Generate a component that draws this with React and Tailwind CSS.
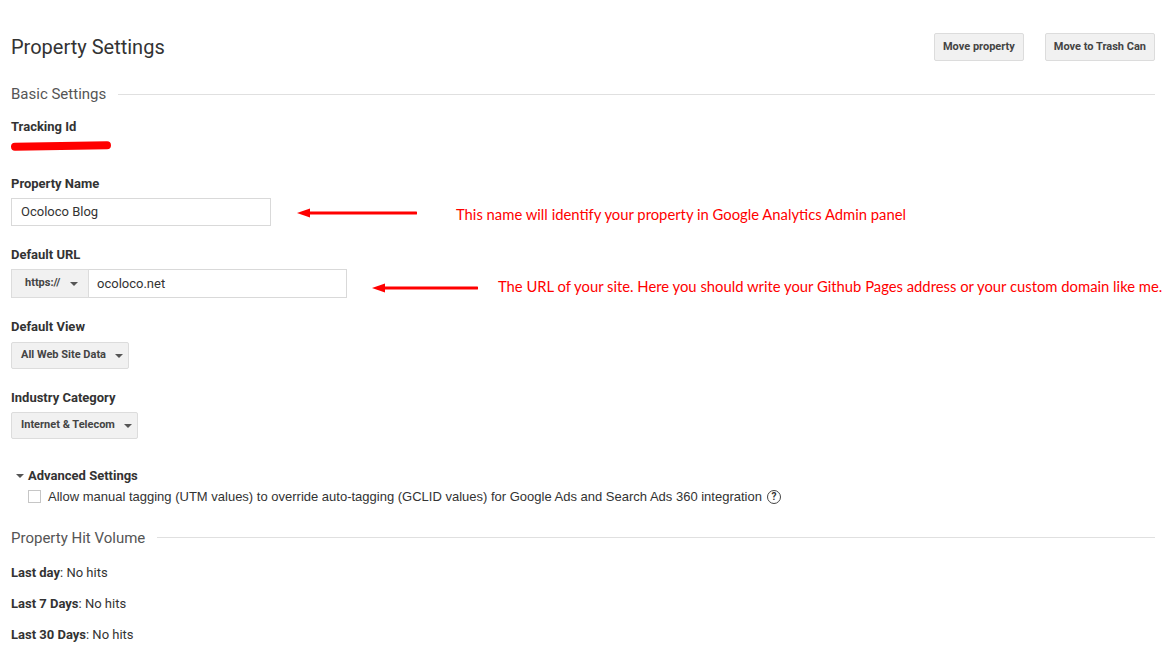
import React from "react";

const roboto = { fontFamily: "Roboto, 'Liberation Sans', sans-serif" };

function Caret() {
  return <span className="inline-block w-0 h-0 border-l-[4px] border-r-[4px] border-t-[4px] border-l-transparent border-r-transparent border-t-[#555]" />;
}

function Arrow({ width }) {
  return (
    <svg width={width} height="12" viewBox={`0 0 ${width} 12`} className="block">
      <line x1="10" y1="6" x2={width - 1} y2="6" stroke="#ff0000" strokeWidth="3" strokeLinecap="round" />
      <polygon points="0,6 13,1.5 13,10.5" fill="#ff0000" />
    </svg>
  );
}

function Annotation({ children }) {
  return (
    <span className="text-[#ff0000] text-[14.8px] whitespace-nowrap" style={{ fontFamily: "Lato, 'Open Sans', sans-serif" }}>
      {children}
    </span>
  );
}

function Label({ children, className = "" }) {
  return <div className={`text-[13px] font-bold text-[#333] leading-4 ${className}`}>{children}</div>;
}

function Select({ children, width }) {
  return (
    <div className={`h-[27px] ${width} flex items-center gap-[9px] pl-[9px] bg-[#f1f1f1] border border-[#dcdcdc] rounded-[2px] text-[11px] font-bold text-[#444]`}>
      <span>{children}</span>
      <Caret />
    </div>
  );
}

function SectionHeading({ children, className = "" }) {
  return (
    <div className={`flex items-center gap-3 ${className}`}>
      <span className="text-[15px] text-[#555] leading-5 whitespace-nowrap">{children}</span>
      <div className="flex-1 h-px bg-[#e0e0e0]" />
    </div>
  );
}

export default function App() {
  return (
    <div className="w-[1176px] h-[658px] bg-white overflow-hidden" style={roboto}>
      <div className="pl-[11px] pr-[21px] pt-[33px]">
        <div className="flex items-center justify-between h-[28px]">
          <h1 className="text-[20px] text-[#333] leading-7 font-normal">Property Settings</h1>
          <div className="flex gap-[21px]">
            <button className="h-[28px] px-[8px] bg-[#f1f1f1] border border-[#dcdcdc] rounded-[2px] text-[11px] font-bold text-[#444]">Move property</button>
            <button className="h-[28px] px-[8px] bg-[#f1f1f1] border border-[#dcdcdc] rounded-[2px] text-[11px] font-bold text-[#444]">Move to Trash Can</button>
          </div>
        </div>

        <SectionHeading className="mt-[23px]">Basic Settings</SectionHeading>

        <Label className="mt-[15px]">Tracking Id</Label>
        <div className="mt-[7px] w-[100px] h-[8px] bg-[#ff0000] rounded-full -rotate-[1deg]" />

        <Label className="mt-[26px]">Property Name</Label>
        <div className="mt-[6px] flex items-center">
          <div className="w-[260px] h-[28px] border border-[#d9d9d9] flex items-center pl-[9px] text-[13px] text-[#333]">Ocoloco Blog</div>
          <div className="ml-[26px] mt-[1px]"><Arrow width={120} /></div>
          <div className="ml-[39px] translate-y-[3px]"><Annotation>This name will identify your property in Google Analytics Admin panel</Annotation></div>
        </div>

        <Label className="mt-[21px]">Default URL</Label>
        <div className="mt-[6px] flex items-center">
          <div className="flex h-[29px]">
            <div className="w-[78px] flex items-center gap-[10px] pl-[13px] bg-[#f1f1f1] border border-[#dcdcdc] text-[11px] font-bold text-[#444]">
              <span>https://</span>
              <Caret />
            </div>
            <div className="w-[258px] flex items-center pl-[8px] border border-l-0 border-[#d9d9d9] text-[13px] text-[#333]">ocoloco.net</div>
          </div>
          <div className="ml-[25px] translate-y-[4px]"><Arrow width={106} /></div>
          <div className="ml-[20px] translate-y-[3px]"><Annotation>The URL of your site. Here you should write your Github Pages address or your custom domain like me.</Annotation></div>
        </div>

        <Label className="mt-[21px]">Default View</Label>
        <div className="mt-[7px]"><Select width="w-[118px]">All Web Site Data</Select></div>

        <Label className="mt-[21px]">Industry Category</Label>
        <div className="mt-[6px]"><Select width="w-[127px]">Internet &amp; Telecom</Select></div>

        <div className="mt-[29px] flex items-center pl-[5px]">
          <span className="inline-block w-0 h-0 border-l-[4px] border-r-[4px] border-t-[4px] border-l-transparent border-r-transparent border-t-[#555]" />
          <span className="ml-[4px] text-[13px] font-bold text-[#333] leading-4">Advanced Settings</span>
        </div>
        <div className="mt-[3px] flex items-center pl-[17px]">
          <div className="w-[13px] h-[13px] border border-[#c6c6c6] bg-white" />
          <span className="ml-[7px] text-[13px] text-[#333] whitespace-nowrap" style={{ fontFamily: "'Liberation Sans', Arial, sans-serif" }}>
            Allow manual tagging (UTM values) to override auto-tagging (GCLID values) for Google Ads and Search Ads 360 integration
          </span>
          <span className="ml-[5px] w-[14px] h-[14px] rounded-full border border-[#444] flex items-center justify-center text-[10px] font-bold text-[#333] leading-none">?</span>
        </div>

        <SectionHeading className="mt-[21px]">Property Hit Volume</SectionHeading>

        <div className="mt-[17px] text-[13px] text-[#333] leading-4"><b>Last day</b>: No hits</div>
        <div className="mt-[15px] text-[13px] text-[#333] leading-4"><b>Last 7 Days</b>: No hits</div>
        <div className="mt-[15px] text-[13px] text-[#333] leading-4"><b>Last 30 Days</b>: No hits</div>
      </div>
    </div>
  );
}
